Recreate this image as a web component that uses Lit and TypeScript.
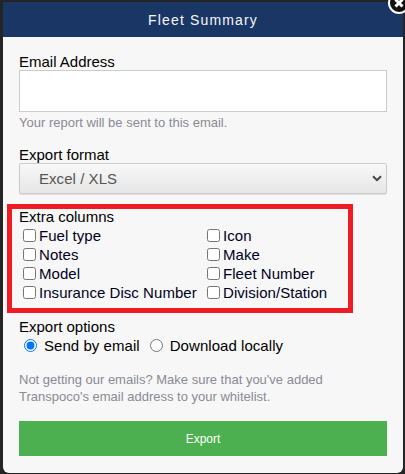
import { LitElement, html, css } from 'lit';
import { customElement } from 'lit/decorators.js';

const COLUMNS = [
  'Fuel type',
  'Icon',
  'Notes',
  'Make',
  'Model',
  'Fleet Number',
  'Insurance Disc Number',
  'Division/Station',
];

@customElement('app-root')
export class AppRoot extends LitElement {
  static styles = css`
    :host {
      display: block;
      width: 405px;
      height: 474px;
      overflow: hidden;
      background: #242424;
      font-family: 'Liberation Sans', Arial, sans-serif;
      color: #000;
      box-sizing: border-box;
      padding: 2px 2px 0 3px;
    }

    .modal {
      position: relative;
      height: 471px;
      background: #f7f7f7;
      border-radius: 0 0 6px 6px;
    }

    .header {
      height: 35px;
      display: flex;
      align-items: center;
      justify-content: center;
      background: #1a3665;
      color: #f4f8fb;
      font-size: 14px;
      letter-spacing: 1.15px;
    }

    .close {
      position: absolute;
      top: -10px;
      right: -7px;
      width: 22px;
      height: 22px;
      display: block;
    }

    .body {
      display: flex;
      flex-direction: column;
      padding: 16px 16px 0;
    }

    .label {
      font-size: 15px;
      line-height: 17px;
    }

    .email {
      display: block;
      box-sizing: border-box;
      width: 100%;
      height: 42px;
      margin: 0;
      background: #fff;
      border: 1px solid #ccc;
    }

    .hint {
      font-size: 13px;
      line-height: 17px;
      color: #8a8a94;
    }

    .email + .hint {
      margin-top: 2px;
    }

    .format {
      margin-top: 15px;
    }

    .select {
      position: relative;
    }

    select {
      display: block;
      box-sizing: border-box;
      width: 100%;
      height: 31px;
      margin: 0;
      padding: 0 19px;
      appearance: none;
      font: 15px 'Liberation Sans', Arial, sans-serif;
      letter-spacing: 0.05px;
      color: #555;
      background: linear-gradient(#f8f8f8, #e6e6e6);
      border: 1px solid #ccc;
      border-radius: 2px;
      box-shadow: 0 1px 1px rgba(0, 0, 0, 0.1);
    }

    .chevron {
      position: absolute;
      top: 12px;
      right: 5px;
      width: 10px;
      height: 7px;
      pointer-events: none;
    }

    .extra {
      position: relative;
      margin-top: 14px;
    }

    .annotation {
      position: absolute;
      top: -4px;
      left: -12px;
      width: 346px;
      height: 109px;
      box-sizing: border-box;
      border: 5px solid #ee1c25;
      pointer-events: none;
    }

    .columns {
      display: grid;
      grid-template-columns: 184px auto;
      justify-content: start;
      margin: 1px 0 0 4px;
    }

    .check {
      display: flex;
      align-items: center;
      height: 19px;
      font-size: 15px;
      letter-spacing: 0.05px;
      color: #00001e;
      white-space: nowrap;
    }

    .check input {
      width: 13px;
      height: 13px;
      margin: 0 3px 0 0;
    }

    .options {
      margin-top: 16px;
    }

    .radios {
      display: flex;
      align-items: center;
      height: 20px;
      margin-left: 5px;
      font-size: 15px;
      letter-spacing: 0.05px;
    }

    .radios input {
      width: 13px;
      height: 13px;
      margin: 0 7px 0 0;
    }

    .radios label {
      display: flex;
      align-items: center;
      margin-right: 10px;
    }

    .note {
      margin-top: 16px;
    }

    .export {
      height: 35px;
      margin-top: 16px;
      padding: 1px 0 0;
      border: 0;
      background: #4caf50;
      color: #fff;
      font: 12px 'Liberation Sans', Arial, sans-serif;
    }
  `;

  render() {
    return html`<div class="modal">
      <div class="header">Fleet Summary</div>
      <svg class="close" viewBox="0 0 22 22">
        <circle cx="11" cy="11" r="10" fill="#111" stroke="#fff" stroke-width="2" />
        <path d="M7.5 7.5l7 7M14.5 7.5l-7 7" stroke="#fff" stroke-width="3" />
      </svg>
      <div class="body">
        <div class="label">Email Address</div>
        <input class="email" type="text" />
        <div class="hint">Your report will be sent to this email.</div>

        <div class="label format">Export format</div>
        <div class="select">
          <select>
            <option>Excel / XLS</option>
          </select>
          <svg class="chevron" viewBox="0 0 10 7">
            <path d="M1 1.2l4 4 4-4" fill="none" stroke="#444" stroke-width="2" />
          </svg>
        </div>

        <div class="extra">
          <div class="label">Extra columns</div>
          <div class="columns">
            ${COLUMNS.map(
              (name) => html`<label class="check"><input type="checkbox" />${name}</label>`,
            )}
          </div>
          <div class="annotation"></div>
        </div>

        <div class="label options">Export options</div>
        <div class="radios">
          <label><input type="radio" name="send" checked />Send by email</label>
          <label><input type="radio" name="send" />Download locally</label>
        </div>

        <div class="hint note">
          Not getting our emails? Make sure that you've added<br />
          Transpoco's email address to your whitelist.
        </div>

        <button class="export">Export</button>
      </div>
    </div>`;
  }
}
